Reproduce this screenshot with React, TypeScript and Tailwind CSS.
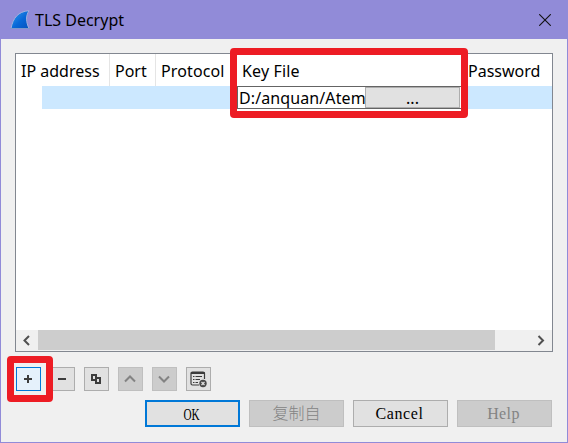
import type { ReactNode } from 'react';

function ToolButton({ children, kind = 'normal' }: { children: ReactNode; kind?: 'normal' | 'active' | 'disabled' }) {
  const look = {
    normal: 'bg-[#e1e1e1] border-[#adadad] text-[#3c3c3c]',
    active: 'bg-[#e5f1fb] border-[#0078d7] text-[#3c3c3c]',
    disabled: 'bg-[#cccccc] border-[#bfbfbf] text-[#838383]',
  }[kind];
  return (
    <button className={`h-6 w-[25px] border ${look}`}>
      <svg width="23" height="22" viewBox="0 0 23 22" fill="none" stroke="currentColor" strokeWidth="2">
        {children}
      </svg>
    </button>
  );
}

function DialogButton({ children, kind = 'normal' }: { children: ReactNode; kind?: 'normal' | 'default' | 'disabled' }) {
  const look = {
    normal: 'border bg-[#e1e1e1] border-[#adadad] text-black',
    default: 'border-2 bg-[#e1e1e1] border-[#0078d7] text-black',
    disabled: 'border bg-[#cccccc] border-[#bfbfbf] text-[#838383]',
  }[kind];
  return (
    <button className={`flex h-[27px] w-[95px] items-center justify-center font-['Liberation_Serif','Noto_Sans_CJK_SC',serif] text-[16px] leading-none ${look}`}>
      {children}
    </button>
  );
}

function RedFrame({ className }: { className: string }) {
  return <div className={`pointer-events-none absolute rounded-[4px] border-[7px] border-[#ed1c24] ${className}`} />;
}

export default function App() {
  return (
    <div className="relative flex h-[443px] w-[568px] flex-col overflow-hidden border border-[#918bd8] bg-[#f0f0f0] font-['Noto_Sans','Noto_Sans_CJK_SC',sans-serif] text-[16px] text-black">
      <header className="flex h-[38px] shrink-0 items-center bg-[#918bd8] pl-[9px] pr-[16px]">
        <svg width="20" height="20" viewBox="0 0 20 20">
          <defs>
            <linearGradient id="fin" x1="0" y1="0" x2="1" y2="1">
              <stop offset="0" stopColor="#38a0ec" />
              <stop offset=".55" stopColor="#0868d8" />
              <stop offset="1" stopColor="#0752bd" />
            </linearGradient>
          </defs>
          <path d="M1 18.5C3 8 8 1.5 19 .7C15.5 6 16 12 19 18.5Z" fill="url(#fin)" stroke="#9fb0df" strokeWidth="1" />
          <path d="M0 18.5H20" stroke="#7e98cb" />
        </svg>
        <h1 className="ml-[5px] text-[16px] leading-none">TLS Decrypt</h1>
        <svg className="ml-auto" width="12" height="12" viewBox="0 0 12 12" stroke="#111" strokeWidth="1.1">
          <path d="M.2 .2L11.8 11.8M11.8 .2L.2 11.8" />
        </svg>
      </header>

      <main className="flex flex-col pl-[14px] pt-[14px]">
        <section className="flex h-[299px] w-[538px] flex-col border border-[#828790] bg-white">
          <div className="flex h-8 shrink-0 items-center whitespace-nowrap leading-[34px]">
            <span className="h-8 w-[94px] border-r border-[#e5e5e5] pl-[5px]">IP address</span>
            <span className="h-8 w-[46px] border-r border-[#e5e5e5] pl-[5px]">Port</span>
            <span className="h-8 w-[81px] border-r border-[#e5e5e5] pl-[5px] tracking-[.12px]">Protocol</span>
            <span className="h-8 w-[226px] pl-[5px] tracking-[.15px]">Key File</span>
            <span className="h-8 pl-[5px]">Password</span>
          </div>
          <div className="ml-[26px] flex h-[23px] shrink-0 bg-[#cce8ff] pl-[195px]">
            <div className="flex h-[23px] w-[225px] overflow-hidden border border-[#646464] bg-white">
              <span className="w-[127px] shrink-0 overflow-hidden whitespace-nowrap pl-px leading-[22px] tracking-[.1px]">D:/anquan/Atem</span>
              <button className="h-[21px] w-[95px] shrink-0 border border-[#adadad] bg-[#e1e1e1] leading-[18px]">...</button>
            </div>
          </div>
          <div className="mt-auto flex h-[21px] items-center bg-[#f0f0f0] pb-px text-[#505050]">
            <svg width="22" height="20" viewBox="0 0 22 20" fill="none" stroke="currentColor" strokeWidth="2"><path d="M13 6L8.5 10.5L13 15" /></svg>
            <div className="h-5 w-[457px] bg-[#cdcdcd]" />
            <svg className="ml-auto" width="22" height="20" viewBox="0 0 22 20" fill="none" stroke="currentColor" strokeWidth="2"><path d="M8.5 6L13 10.5L8.5 15" /></svg>
          </div>
        </section>

        <div className="mt-[15px] flex gap-[9px] pl-px">
          <ToolButton kind="active"><path d="M7 11H15M11 7V15" /></ToolButton>
          <ToolButton><path d="M7 11H15" /></ToolButton>
          <ToolButton><path d="M7 7H11V12H7ZM11 10H15V15H11Z" /></ToolButton>
          <ToolButton kind="disabled"><path d="M6 13.5L11 8.5L16 13.5" /></ToolButton>
          <ToolButton kind="disabled"><path d="M6 8.5L11 13.5L16 8.5" /></ToolButton>
          <ToolButton>
            <path d="M12 17H5.5Q4 17 4 15.5V5Q4 4 5.5 4H16Q17.5 4 17.5 5V11" strokeWidth="1.2" />
            <path d="M4 5H17.5" />
            <path d="M6 8.5H7.5M8.5 8.5H15M6 11.5H7.5M8.5 11.5H13M6 14.5H7.5M8.5 14.5H11" strokeWidth="1" />
            <circle cx="16" cy="15.5" r="3.7" fill="#484848" stroke="none" />
            <path d="M14.5 14L17.5 17M17.5 14L14.5 17" stroke="#e1e1e1" strokeWidth="1.2" />
          </ToolButton>
        </div>

        <footer className="mt-[9px] flex gap-[9px] pl-[130px]">
          <DialogButton kind="default"><span className="-translate-x-px scale-x-[.7] scale-y-[1.1]">OK</span></DialogButton>
          <DialogButton kind="disabled"><span className="font-light">复制自</span></DialogButton>
          <DialogButton><span className="-translate-x-px scale-y-[1.05] tracking-[.6px]">Cancel</span></DialogButton>
          <DialogButton kind="disabled"><span className="-translate-x-px scale-y-[1.05] tracking-[.4px]">Help</span></DialogButton>
        </footer>
      </main>

      <RedFrame className="left-[229px] top-[47px] h-[70px] w-[238px]" />
      <RedFrame className="left-[6px] top-[355px] h-[46px] w-[46px]" />
    </div>
  );
}
